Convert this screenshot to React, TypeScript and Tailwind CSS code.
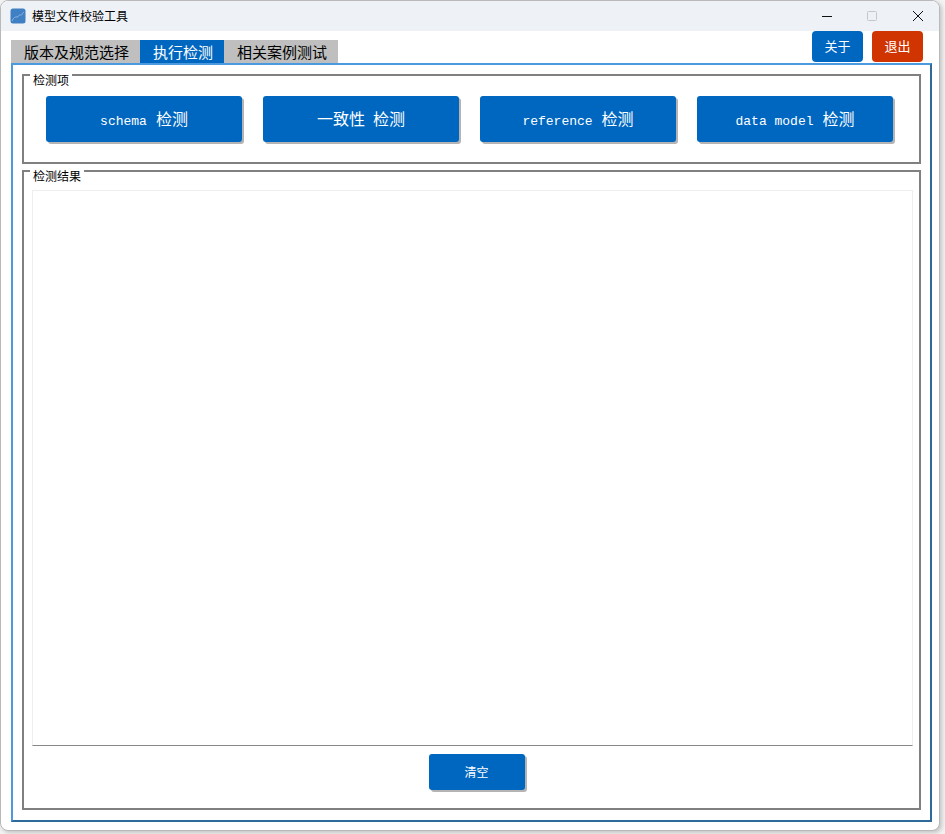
const cjk = { fontFamily: '"Noto Sans CJK SC", "Liberation Sans", sans-serif' };
const mono = { fontFamily: '"Liberation Mono", monospace' };

function ActionButton({ latin, cjkText, lead, wide }: { latin?: string; cjkText: string; lead?: string; wide?: boolean }) {
  return (
    <button className={`${wide ? "h-[46px] w-[196px] text-[16px]" : "h-[36px] w-[96px] text-[12px]"} rounded-[3px] bg-[#0067c0] text-white shadow-[2px_2px_0_#b4b4b4] flex items-baseline justify-center ${wide ? "pt-[10px]" : "pt-[9px]"}`}>
      {latin && <span style={mono} className="text-[13px] mr-[9px]">{latin}</span>}
      {lead && <span className="mr-[8px]">{lead}</span>}
      <span>{cjkText}</span>
    </button>
  );
}

function Group({ title, className, children }: { title: string; className: string; children: React.ReactNode }) {
  return (
    <div className={`relative border-2 border-[#808080] ${className}`}>
      <span className="absolute left-[6px] top-[-3px] bg-white px-[3px] text-[12px] leading-[14px] text-black">{title}</span>
      {children}
    </div>
  );
}

export default function App() {
  return (
    <div style={cjk} className="w-[945px] h-[834px] bg-[#f3f3f3] overflow-hidden">
      <div className="w-[940px] h-[831px] bg-white rounded-[8px] border border-[#b9b9b9] shadow-[2px_2px_4px_#c4c4c4] overflow-hidden flex flex-col">
        <div className="h-[30px] shrink-0 bg-[#eef2f7] flex items-center pl-[9px] pr-[15px]">
          <svg width="16" height="16" viewBox="0 0 16 16" className="mr-[6px]">
            <rect x="0.5" y="0.5" width="15" height="15" rx="2.5" fill="#3f7fc4" />
            <path d="M2 13 C4 9 5 9 7 9 C9 9 9 6 10.5 7 C12 8 12 5 14 4" fill="none" stroke="#8fb8e2" strokeWidth="1" />
          </svg>
          <span className="text-[12px] text-black">模型文件校验工具</span>
          <div className="ml-auto flex items-center">
            <svg width="12" height="12" viewBox="0 0 12 12" className="mr-[33px]">
              <path d="M1 6.5H11" stroke="#111" strokeWidth="1" />
            </svg>
            <svg width="12" height="12" viewBox="0 0 12 12" className="mr-[34px]">
              <rect x="1.5" y="1.5" width="9" height="9" rx="1" fill="none" stroke="#c6c6c6" />
            </svg>
            <svg width="12" height="12" viewBox="0 0 12 12">
              <path d="M1 1L11 11M11 1L1 11" stroke="#111" strokeWidth="1" />
            </svg>
          </div>
        </div>

        <div className="h-[32px] shrink-0 pl-[10px] flex items-end">
          <div className="flex h-[23px] text-[15px] leading-[23px] text-black">
            <div className="w-[129px] bg-[#bfbfbf] text-center pl-[2px]">版本及规范选择</div>
            <div className="w-[84px] bg-[#0067c0] text-center text-white pl-[2px]">执行检测</div>
            <div className="w-[114px] bg-[#bfbfbf] text-center pl-[2px]">相关案例测试</div>
          </div>
          <div className="ml-auto mr-[16px] mb-px flex gap-[9px] self-end text-[13px] text-white">
            <button className="w-[51px] h-[31px] rounded-[4px] bg-[#0067c0] pb-[2px]">关于</button>
            <button className="w-[51px] h-[31px] rounded-[4px] bg-[#d03400] pb-[2px]">退出</button>
          </div>
        </div>

        <div className="w-[921px] h-[759px] ml-[10px] border-2 border-t-[#4a9ae0] border-l-[#4a9ae0] border-r-[#2e6a9c] border-b-[#2e6a9c] px-[9px] pt-[9px] flex flex-col gap-[6px]">
          <Group title="检测项" className="h-[90px] shrink-0 pl-[22px] pt-[20px]">
            <div className="flex gap-[21px]">
              <ActionButton wide latin="schema" cjkText="检测" />
              <ActionButton wide lead="一致性" cjkText="检测" />
              <ActionButton wide latin="reference" cjkText="检测" />
              <ActionButton wide latin="data model" cjkText="检测" />
            </div>
          </Group>
          <Group title="检测结果" className="h-[640px] shrink-0 pl-[8px] pr-[6px] pt-[18px] flex flex-col">
            <div className="h-[556px] w-[881px] border border-[#eeeeee] border-b-[#888888]" />
            <div className="flex justify-center pt-[8px] pl-[8px]">
              <ActionButton cjkText="清空" />
            </div>
          </Group>
        </div>
      </div>
    </div>
  );
}
